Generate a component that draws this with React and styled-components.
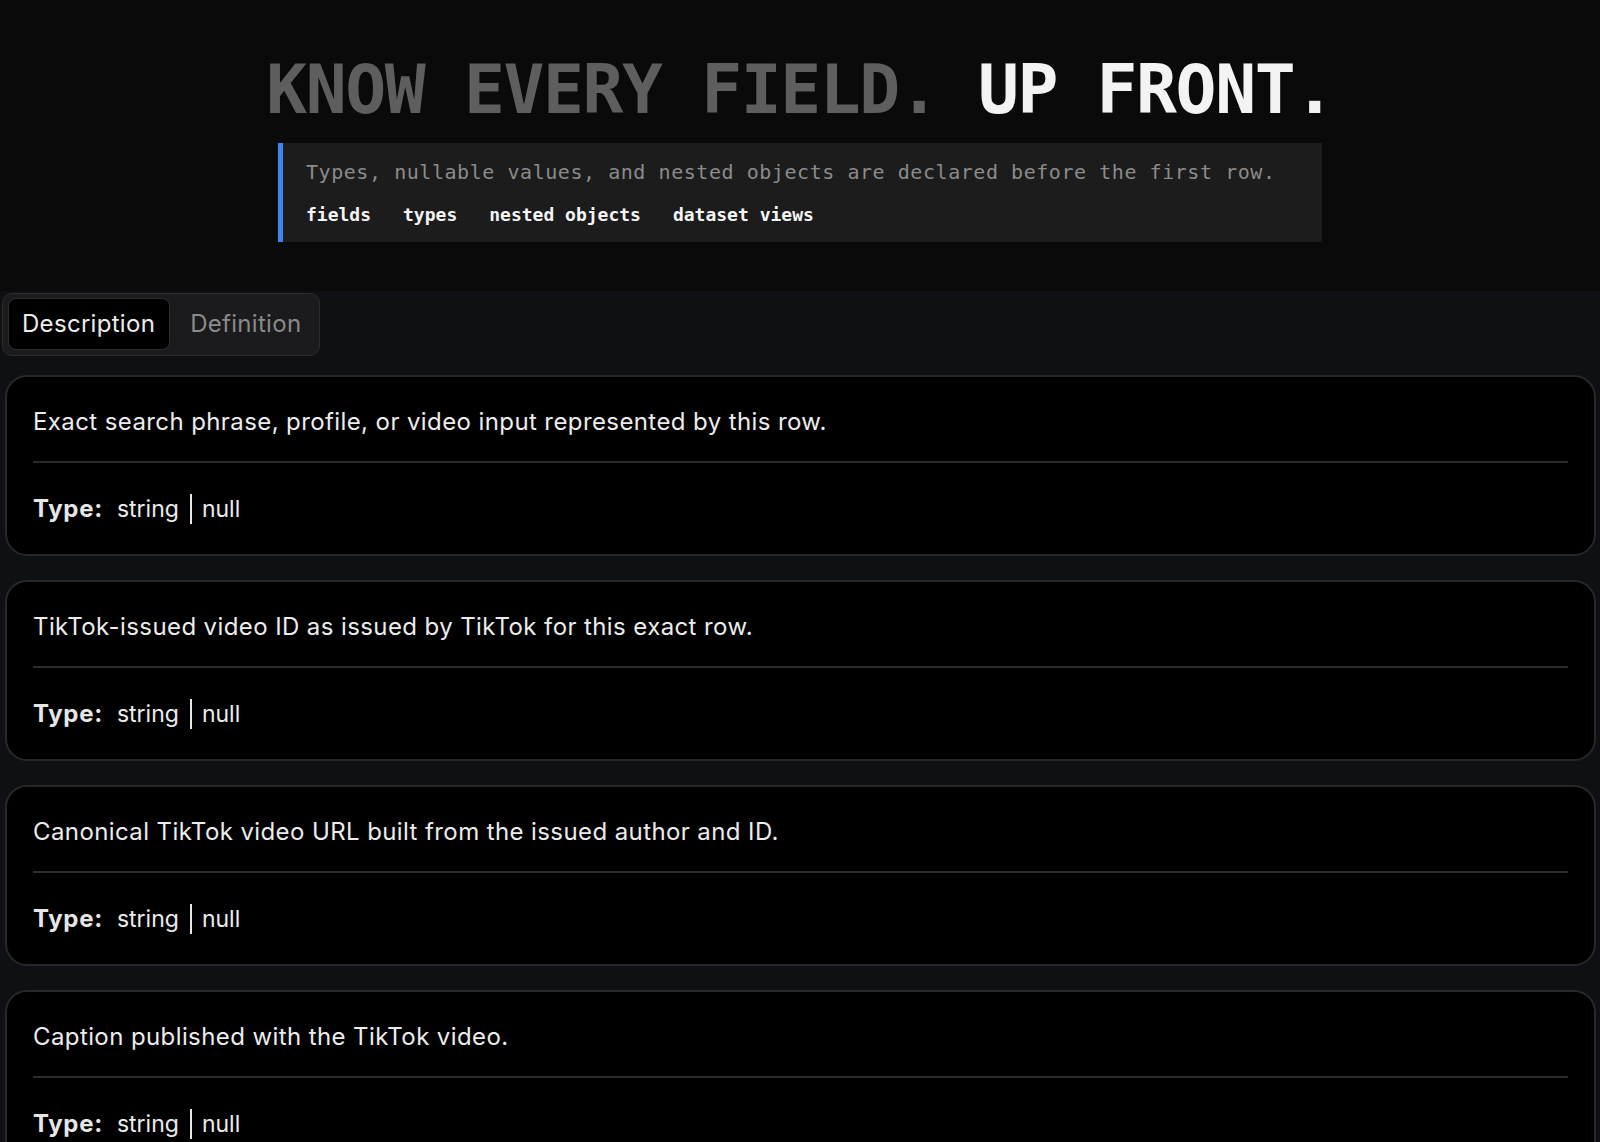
import React, { useState } from "react";
import styled, { createGlobalStyle } from "styled-components";

const GlobalStyle = createGlobalStyle`
  * { box-sizing: border-box; }
  html, body { margin: 0; padding: 0; background: #0a0a0a; }
  body { font-family: Inter, "Noto Sans", sans-serif; color: #ececec; }
`;

const Page = styled.div`
  min-height: 100vh;
  background: #0a0a0a;
`;

const Hero = styled.header`
  display: flex;
  flex-direction: column;
  align-items: center;
  padding: 52px 0 49px;
`;

const Title = styled.h1`
  margin: 0;
  font-family: "DejaVu Sans Mono", "Liberation Mono", monospace;
  font-weight: 700;
  font-size: 68px;
  line-height: 76px;
  letter-spacing: -1.4px;
  color: #f3f3f3;
  white-space: nowrap;
`;

const Dim = styled.span`
  color: #5e5e5e;
`;

const Callout = styled.div`
  width: 1044px;
  margin-top: 15px;
  background: #1c1c1c;
  border-left: 5px solid #3d85f0;
  padding: 15px 24px 15px 23px;
  display: flex;
  flex-direction: column;
  gap: 17px;
`;

const CalloutText = styled.p`
  margin: 0;
  font-family: "DejaVu Sans Mono", "Liberation Mono", monospace;
  font-size: 20px;
  line-height: 28px;
  letter-spacing: 0.55px;
  color: #8b8b8b;
`;

const TagRow = styled.div`
  display: flex;
  gap: 32px;
`;

const Tag = styled.span`
  font-family: "DejaVu Sans Mono", "Liberation Mono", monospace;
  font-weight: 700;
  font-size: 18px;
  line-height: 24px;
  color: #f5f5f5;
`;

const Band = styled.section`
  background: #0f1013;
  padding: 2px 4px 40px 2px;
`;

const TabList = styled.div`
  display: inline-flex;
  align-items: stretch;
  gap: 4px;
  padding: 4px 5px 5px;
  background: #1b1b1d;
  border: 1px solid #2c2c2f;
  border-radius: 10px;
`;

const Tab = styled.button`
  font-family: Inter, "Noto Sans", sans-serif;
  font-size: 24px;
  line-height: 30px;
  letter-spacing: 0.3px;
  padding: 10px ${(p) => (p.$active ? "14px" : "12px")} 10px ${(p) => (p.$active ? "13px" : "15px")};
  border-radius: 8px;
  cursor: pointer;
  background: ${(p) => (p.$active ? "#000000" : "transparent")};
  border: 1px solid ${(p) => (p.$active ? "#2e2e30" : "transparent")};
  color: ${(p) => (p.$active ? "#ececec" : "#8a8a8a")};
`;

const CardList = styled.div`
  display: flex;
  flex-direction: column;
  gap: 24px;
  margin-top: 19px;
  padding-left: 3px;
`;

const Card = styled.article`
  background: #000;
  border: 2px solid #27282a;
  border-radius: 22px;
  padding: 27px 26px 27px;
`;

const Desc = styled.p`
  margin: 0;
  font-size: 24px;
  line-height: 36px;
  letter-spacing: 0.4px;
  color: #ececec;
`;

const Divider = styled.hr`
  margin: 21px 0 28px;
  border: none;
  height: 2px;
  background: #2c2c2c;
`;

const TypeRow = styled.div`
  display: flex;
  align-items: center;
  font-size: 23px;
  line-height: 36px;
  color: #ececec;
`;

const TypeLabel = styled.span`
  font-size: 24px;
  font-weight: 700;
  letter-spacing: 0.7px;
  margin-right: 14px;
  color: #e6e6e6;
`;

const Bar = styled.span`
  display: inline-block;
  width: 2px;
  height: 30px;
  background: #e6e6e6;
  margin: 0 10px 0 11px;
`;

const fields = [
  "Exact search phrase, profile, or video input represented by this row.",
  "TikTok-issued video ID as issued by TikTok for this exact row.",
  "Canonical TikTok video URL built from the issued author and ID.",
  "Caption published with the TikTok video.",
  "Username of the account that published the video.",
  "Publication timestamp of the video in ISO 8601 format.",
];

export default function App() {
  const [tab, setTab] = useState("description");
  return (
    <Page>
      <GlobalStyle />
      <Hero>
        <Title>
          <Dim>KNOW EVERY FIELD.</Dim> UP FRONT.
        </Title>
        <Callout>
          <CalloutText>
            Types, nullable values, and nested objects are declared before the first row.
          </CalloutText>
          <TagRow>
            <Tag>fields</Tag>
            <Tag>types</Tag>
            <Tag>nested objects</Tag>
            <Tag>dataset views</Tag>
          </TagRow>
        </Callout>
      </Hero>
      <Band>
        <TabList>
          <Tab $active={tab === "description"} onClick={() => setTab("description")}>
            Description
          </Tab>
          <Tab $active={tab === "definition"} onClick={() => setTab("definition")}>
            Definition
          </Tab>
        </TabList>
        <CardList>
          {fields.map((f) => (
            <Card key={f}>
              <Desc>{f}</Desc>
              <Divider />
              <TypeRow>
                <TypeLabel>Type:</TypeLabel>
                string
                <Bar />
                null
              </TypeRow>
            </Card>
          ))}
        </CardList>
      </Band>
    </Page>
  );
}
